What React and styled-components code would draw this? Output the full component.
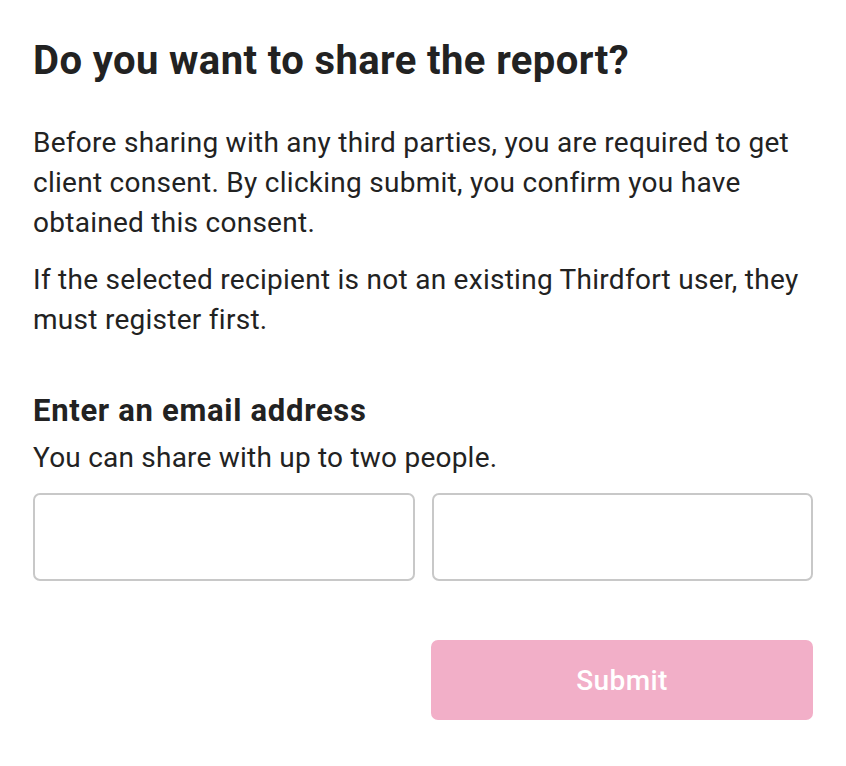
import React from "react";
import styled, { createGlobalStyle } from "styled-components";

const GlobalStyle = createGlobalStyle`
  * { box-sizing: border-box; }
  body {
    margin: 0;
    background: #ffffff;
    font-family: Roboto, "Liberation Sans", sans-serif;
    color: #222222;
  }
`;

const Page = styled.div`
  width: 846px;
  padding: 37px 33px 40px;
`;

const Title = styled.h1`
  margin: 0 0 38px;
  font-size: 40px;
  line-height: 48px;
  font-weight: 700;
  letter-spacing: 0.4px;
`;

const Intro = styled.div`
  display: flex;
  flex-direction: column;
  gap: 17px;
`;

const Text = styled.p`
  margin: 0;
  font-size: 28px;
  line-height: 40px;
  font-weight: 400;
  letter-spacing: 0.27px;
`;

const Section = styled.div`
  margin-top: 51px;
`;

const Label = styled.h2`
  margin: 0 0 7px;
  font-size: 31px;
  line-height: 40px;
  font-weight: 700;
  letter-spacing: 0.7px;
`;

const Hint = styled.p`
  margin: 0;
  font-size: 28px;
  line-height: 40px;
  letter-spacing: 0.22px;
`;

const Inputs = styled.div`
  display: grid;
  grid-template-columns: 1fr 1fr;
  gap: 17px;
  margin-top: 15px;
`;

const Input = styled.input`
  height: 88px;
  width: 100%;
  border: 2px solid #c8c8c8;
  border-radius: 7px;
  padding: 0 16px;
  font: inherit;
  font-size: 28px;
  outline: none;
`;

const Actions = styled.div`
  display: flex;
  justify-content: flex-end;
  margin-top: 59px;
`;

const Button = styled.button`
  width: 382px;
  height: 80px;
  border: none;
  border-radius: 7px;
  background: #f2afc8;
  color: #ffffff;
  font-family: Roboto, "Liberation Sans", sans-serif;
  font-size: 28px;
  font-weight: 500;
  letter-spacing: 0.4px;
`;

export default function App() {
  return (
    <>
      <GlobalStyle />
      <Page>
        <Title>Do you want to share the report?</Title>
        <Intro>
          <Text>
            Before sharing with any third parties, you are required to get
            client consent. By clicking submit, you confirm you have obtained
            this consent.
          </Text>
          <Text>
            If the selected recipient is not an existing Thirdfort user, they
            must register first.
          </Text>
        </Intro>
        <Section>
          <Label>Enter an email address</Label>
          <Hint>You can share with up to two people.</Hint>
          <Inputs>
            <Input type="email" />
            <Input type="email" />
          </Inputs>
        </Section>
        <Actions>
          <Button disabled>Submit</Button>
        </Actions>
      </Page>
    </>
  );
}
